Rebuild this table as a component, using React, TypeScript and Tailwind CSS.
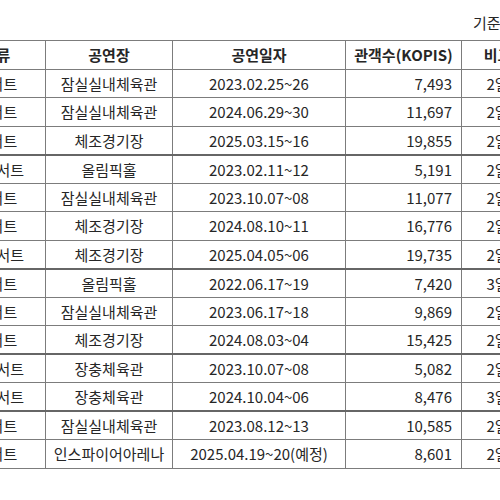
const rows = [
  { kind: "콘서트", venue: "잠실실내체육관", date: "2023.02.25~26", count: "7,493", note: "2일", end: false },
  { kind: "콘서트", venue: "잠실실내체육관", date: "2024.06.29~30", count: "11,697", note: "2일", end: false },
  { kind: "콘서트", venue: "체조경기장", date: "2025.03.15~16", count: "19,855", note: "2일", end: true },
  { kind: "팬콘서트", venue: "올림픽홀", date: "2023.02.11~12", count: "5,191", note: "2일", end: false },
  { kind: "콘서트", venue: "잠실실내체육관", date: "2023.10.07~08", count: "11,077", note: "2일", end: false },
  { kind: "콘서트", venue: "체조경기장", date: "2024.08.10~11", count: "16,776", note: "2일", end: false },
  { kind: "팬콘서트", venue: "체조경기장", date: "2025.04.05~06", count: "19,735", note: "2일", end: true },
  { kind: "콘서트", venue: "올림픽홀", date: "2022.06.17~19", count: "7,420", note: "3일", end: false },
  { kind: "콘서트", venue: "잠실실내체육관", date: "2023.06.17~18", count: "9,869", note: "2일", end: false },
  { kind: "콘서트", venue: "체조경기장", date: "2024.08.03~04", count: "15,425", note: "2일", end: true },
  { kind: "팬콘서트", venue: "장충체육관", date: "2023.10.07~08", count: "5,082", note: "2일", end: false },
  { kind: "팬콘서트", venue: "장충체육관", date: "2024.10.04~06", count: "8,476", note: "3일", end: true },
  { kind: "콘서트", venue: "잠실실내체육관", date: "2023.08.12~13", count: "10,585", note: "2일", end: false },
  { kind: "콘서트", venue: "인스파이어아레나", date: "2025.04.19~20(예정)", count: "8,601", note: "2일", end: false },
];

export default function App() {
  return (
    <div
      className="w-[500px] h-[500px] overflow-hidden bg-white text-[#262626] text-[15px]"
      style={{ fontFamily: '"Noto Sans CJK KR", "Noto Sans", sans-serif' }}
    >
      <div className="h-[40px] pl-[473px] pt-[12px] whitespace-nowrap leading-[22px]">
        기준: 2025년 4월
      </div>
      <table className="ml-[-53px] border-collapse table-fixed w-[586px]">
        <colgroup>
          <col className="w-[98px]" />
          <col className="w-[127px]" />
          <col className="w-[173px]" />
          <col className="w-[116px]" />
          <col className="w-[72px]" />
        </colgroup>
        <thead>
          <tr className="h-[28.5px]">
            <th className="border border-[#7c7c7c] font-bold leading-none">종류</th>
            <th className="border border-[#7c7c7c] font-bold leading-none">공연장</th>
            <th className="border border-[#7c7c7c] font-bold leading-none">공연일자</th>
            <th className="border border-[#7c7c7c] font-bold leading-none">관객수(KOPIS)</th>
            <th className="border border-[#7c7c7c] font-bold leading-none">비고</th>
          </tr>
        </thead>
        <tbody>
          {rows.map((r, i) => {
            const b = r.end
              ? "border-x border-t border-[#7c7c7c] border-b-2 border-b-[#666666]"
              : "border border-[#7c7c7c]";
            return (
              <tr key={i} className="h-[28.5px] leading-none whitespace-nowrap">
                <td className={`${b} text-center`}>{r.kind}</td>
                <td className={`${b} text-center`}>{r.venue}</td>
                <td className={`${b} text-center`}>{r.date}</td>
                <td className={`${b} text-right pr-[9px]`}>{r.count}</td>
                <td className={`${b} text-center`}>{r.note}</td>
              </tr>
            );
          })}
        </tbody>
      </table>
    </div>
  );
}
